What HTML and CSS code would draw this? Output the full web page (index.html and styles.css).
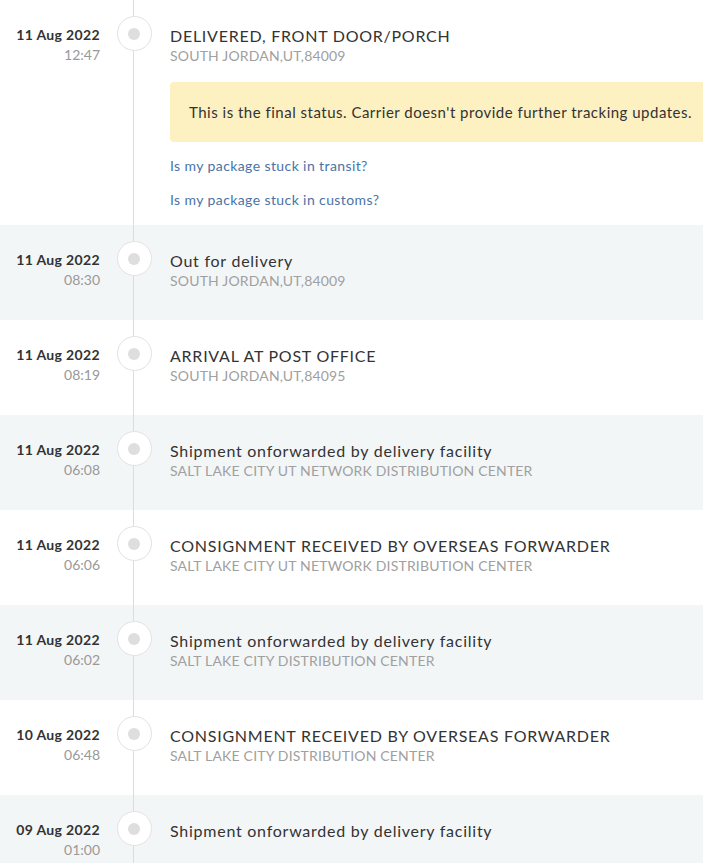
FILE: index.html
```html
<!DOCTYPE html>
<html lang="en">
<head>
    <meta charset="UTF-8">
    <meta name="viewport" content="width=device-width, initial-scale=1.0">
    <title>Tracking history</title>
    <link rel="stylesheet" href="styles.css">
</head>
<body>
    <div class="timeline">
        <!-- Latest event -->
        <div class="event">
            <div class="event-date">
                <div class="day">11 Aug 2022</div>
                <div class="time">12:47</div>
            </div>
            <div class="event-marker"><span class="dot"></span></div>
            <div class="event-body">
                <div class="status">DELIVERED, FRONT DOOR/PORCH</div>
                <div class="place">SOUTH JORDAN,UT,84009</div>
                <div class="final-note">This is the final status. Carrier doesn't provide further tracking updates.</div>
                <a href="#" class="help-link">Is my package stuck in transit?</a>
                <a href="#" class="help-link">Is my package stuck in customs?</a>
            </div>
        </div>

        <div class="event shaded">
            <div class="event-date">
                <div class="day">11 Aug 2022</div>
                <div class="time">08:30</div>
            </div>
            <div class="event-marker"><span class="dot"></span></div>
            <div class="event-body">
                <div class="status">Out for delivery</div>
                <div class="place">SOUTH JORDAN,UT,84009</div>
            </div>
        </div>

        <div class="event">
            <div class="event-date">
                <div class="day">11 Aug 2022</div>
                <div class="time">08:19</div>
            </div>
            <div class="event-marker"><span class="dot"></span></div>
            <div class="event-body">
                <div class="status">ARRIVAL AT POST OFFICE</div>
                <div class="place">SOUTH JORDAN,UT,84095</div>
            </div>
        </div>

        <div class="event shaded">
            <div class="event-date">
                <div class="day">11 Aug 2022</div>
                <div class="time">06:08</div>
            </div>
            <div class="event-marker"><span class="dot"></span></div>
            <div class="event-body">
                <div class="status">Shipment onforwarded by delivery facility</div>
                <div class="place">SALT LAKE CITY UT NETWORK DISTRIBUTION CENTER</div>
            </div>
        </div>

        <div class="event">
            <div class="event-date">
                <div class="day">11 Aug 2022</div>
                <div class="time">06:06</div>
            </div>
            <div class="event-marker"><span class="dot"></span></div>
            <div class="event-body">
                <div class="status">CONSIGNMENT RECEIVED BY OVERSEAS FORWARDER</div>
                <div class="place">SALT LAKE CITY UT NETWORK DISTRIBUTION CENTER</div>
            </div>
        </div>

        <div class="event shaded">
            <div class="event-date">
                <div class="day">11 Aug 2022</div>
                <div class="time">06:02</div>
            </div>
            <div class="event-marker"><span class="dot"></span></div>
            <div class="event-body">
                <div class="status">Shipment onforwarded by delivery facility</div>
                <div class="place">SALT LAKE CITY DISTRIBUTION CENTER</div>
            </div>
        </div>

        <div class="event">
            <div class="event-date">
                <div class="day">10 Aug 2022</div>
                <div class="time">06:48</div>
            </div>
            <div class="event-marker"><span class="dot"></span></div>
            <div class="event-body">
                <div class="status">CONSIGNMENT RECEIVED BY OVERSEAS FORWARDER</div>
                <div class="place">SALT LAKE CITY DISTRIBUTION CENTER</div>
            </div>
        </div>

        <div class="event shaded">
            <div class="event-date">
                <div class="day">09 Aug 2022</div>
                <div class="time">01:00</div>
            </div>
            <div class="event-marker"><span class="dot"></span></div>
            <div class="event-body">
                <div class="status">Shipment onforwarded by delivery facility</div>
            </div>
        </div>
    </div>
</body>
</html>
```

FILE: styles.css
```css
* { margin: 0; padding: 0; box-sizing: border-box; }
body {
    font-family: Lato, "Open Sans", sans-serif;
    background-color: #fff;
    color: #333;
    overflow: hidden;
}
.timeline { width: 100%; }
.event { display: flex; min-height: 95px; background-color: #fff; }
.event.shaded { background-color: #f3f6f7; }

.event-date { width: 100px; flex-shrink: 0; padding-top: 25px; text-align: right; }
.day { font-size: 14px; line-height: 20px; font-weight: bold; color: #333; letter-spacing: 0.35px; }
.time { font-size: 14px; line-height: 20px; color: #999; }

.event-marker {
    width: 68px;
    flex-shrink: 0;
    padding-top: 16px;
    display: flex;
    justify-content: center;
    align-items: flex-start;
    background: linear-gradient(#dcdcdc, #dcdcdc) no-repeat 33px 0 / 1px 100%;
}
.dot {
    width: 35px;
    height: 35px;
    border-radius: 50%;
    background-color: #fff;
    border: 1px solid #e2e2e2;
    display: flex;
    justify-content: center;
    align-items: center;
}
.dot::after {
    content: "";
    width: 12px;
    height: 12px;
    border-radius: 50%;
    background-color: #dedede;
}

.event-body { flex: 1; min-width: 0; padding: 26px 0 0 2px; }
.status { font-size: 16px; line-height: 20px; color: #333; letter-spacing: 0.75px; white-space: nowrap; }
.place { font-size: 14px; line-height: 20px; color: #a0a0a0; letter-spacing: 0.18px; white-space: nowrap; }

.final-note {
    margin-top: 16px;
    padding: 20px 0 20px 19px;
    background-color: #fdf0c1;
    border-radius: 4px 0 0 4px;
    font-size: 15px;
    line-height: 20px;
    color: #333;
    letter-spacing: 0.5px;
    white-space: nowrap;
}
.help-link {
    display: block;
    margin-top: 14px;
    font-size: 14px;
    line-height: 20px;
    color: #4c72a6;
    letter-spacing: 0.4px;
    text-decoration: none;
}
.help-link:last-child { margin-bottom: 15px; }
```
